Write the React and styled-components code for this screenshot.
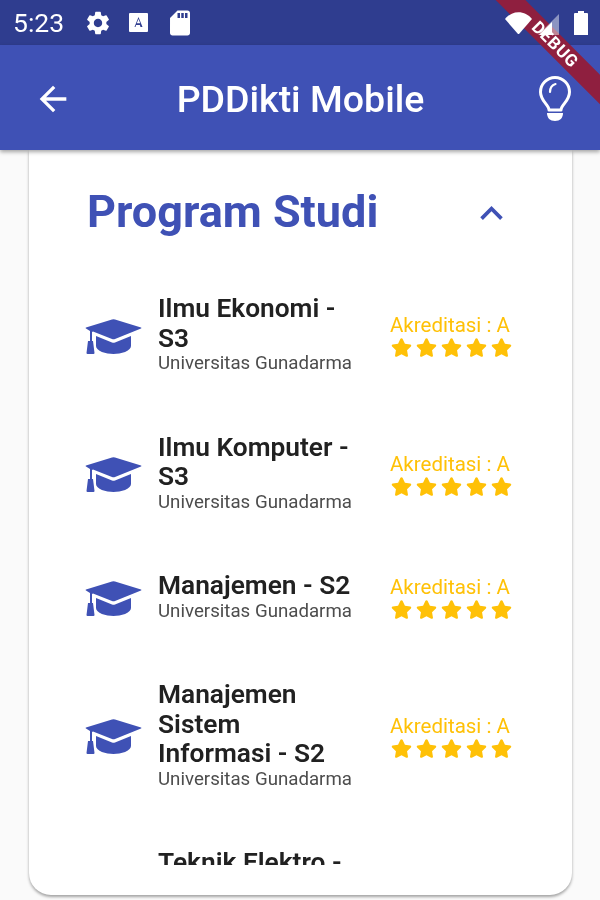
import React from 'react';
import styled, { createGlobalStyle } from 'styled-components';
import { MdArrowBack, MdSettings, MdSdCard, MdKeyboardArrowUp } from 'react-icons/md';
import { FaStar } from 'react-icons/fa';

const Global = createGlobalStyle`
  html, body { margin: 0; padding: 0; background: #fafafa; }
  body { font-family: Roboto, "Liberation Sans", sans-serif; }
`;

const Screen = styled.div`
  position: relative; width: 600px; height: 900px; overflow: hidden;
  background: #fafafa; display: flex; flex-direction: column; filter: blur(0.6px);
`;
const StatusBar = styled.div`
  height: 45px; background: #2f3d8f; color: #fff; display: flex; align-items: center;
  padding: 0 12px 0 13px; box-sizing: border-box; flex: none;
`;
const Clock = styled.span`font-size: 26.5px; line-height: 45px; width: 71px;`;
const StatusIcons = styled.div`display: flex; align-items: center; gap: 17px; flex: 1; svg { display: block; }`;
const Tray = styled.div`
  display: flex; align-items: center; position: relative; z-index: 4; svg { display: block; }
  > :nth-child(2) { margin-left: 6px; margin-top: 3px; }
  > :nth-child(3) { margin-left: 15px; }
`;
const AppBar = styled.header`
  height: 105px; background: #3f51b5; color: #fff; display: flex; align-items: center; flex: none;
  justify-content: space-between; padding: 2px 29px 0 33px; box-sizing: border-box;
  box-shadow: 0 2px 4px rgba(0,0,0,.35); position: relative; z-index: 1;
`;
const Title = styled.h1`margin: 1px 11px 0 0; font-size: 37.5px; font-weight: 500; line-height: 42px;`;
const Body = styled.main`flex: 1; padding: 0 28px 5px 29px; min-height: 0; display: flex;`;
const Card = styled.section`
  flex: 1; background: #fff; border-radius: 0 0 22px 22px; box-shadow: 0 2px 3px rgba(0,0,0,.35);
  padding: 0 60px 30px 56px; display: flex; flex-direction: column; min-height: 0;
`;
const CardHead = styled.div`
  display: flex; align-items: center; justify-content: space-between; height: 123px; padding: 0 0 0 2px; flex: none;
`;
const CardTitle = styled.h2`margin: 0; color: #3f51b5; font-size: 45px; font-weight: 700; line-height: 52px;`;
const Collapse = styled.span`display: flex; color: #3f51b5; margin: 3px -2px 0 0;`;
const List = styled.div`flex: 1; overflow: hidden; display: flex; flex-direction: column; gap: 59.5px; padding-top: 21px; min-height: 0;`;
const Row = styled.article`display: flex; align-items: center; flex: none;`;
const Cap = styled.div`width: 73px; flex: none; display: flex; margin-top: 5px; color: #3f51b5; svg { display: block; }`;
const Info = styled.div`width: 232px; flex: none; padding-right: 34px; box-sizing: border-box;`;
const Course = styled.div`font-size: 26.3px; font-weight: 600; line-height: 29.5px; color: #212121;`;
const Campus = styled.div`font-size: 18.7px; line-height: 20px; color: #4d4d4d; white-space: nowrap;`;
const Rating = styled.div`display: flex; flex-direction: column; align-items: flex-start; width: 122px; flex: none; margin-top: 4px;`;
const Grade = styled.div`font-size: 20.5px; line-height: 24px; color: #ffc107; white-space: nowrap;`;
const Stars = styled.div`display: flex; gap: 4px; margin-left: 1px; color: #ffc107; svg { display: block; }`;
const Ribbon = styled.div`
  position: absolute; top: 34px; right: -40px; width: 170px; height: 21px; transform: rotate(45deg);
  background: #8f1f3f; color: #fff; font-size: 17px; font-weight: 700; line-height: 21px; text-align: center;
  letter-spacing: .6px; z-index: 3;
`;

const courses = [
  'Ilmu Ekonomi - S3',
  'Ilmu Komputer - S3',
  'Manajemen - S2',
  'Manajemen Sistem Informasi - S2',
  'Teknik Elektro - S2',
];

const GradCap = () => (
  <svg width="57" height="35" viewBox="0 0 57 35" fill="currentColor">
    <path d="M1 9.500Q0 9 1 8.500L27 .5Q28.500 0 30 .5L56 8.500Q57 9 56 9.500L30 20Q28.500 20.500 27 20L8 12.500 7 13v9L5 22V12z" />
    <path d="M11 17l16 6.500q1.500.5 3 0L46 17v10c0 5-10 8-17.500 8S11 32 11 27z" />
    <path d="M3 22h5l1.500 12q0 1-1 1H2.500q-1 0-1-1z" />
  </svg>
);
const Bulb = () => (
  <svg width="32" height="45" viewBox="0 0 32 45" fill="none" stroke="#fff">
    <path d="M10 34c0-5-8.500-9-8.500-18a14.500 14.500 0 0 1 29 0c0 9-8.500 13-8.500 18z" strokeWidth="3" strokeLinejoin="round" />
    <path d="M11 16c0-4 2-7 5.500-8" strokeWidth="2.200" strokeLinecap="round" />
    <path d="M8 37h16c0 5-3 8-8 8s-8-3-8-8z" fill="#fff" stroke="none" />
  </svg>
);
const AdBadge = () => (
  <svg width="19" height="19" viewBox="0 0 19 19">
    <rect width="19" height="19" rx="1" fill="#fff" />
    <path d="M5.500 14L9.500 4l4 10h-2l-.6-2H7.100l-.6 2zM7.800 10.200h3.400L9.500 6z" fill="#2f3d8f" fillRule="evenodd" />
  </svg>
);
const Wifi = () => (
  <svg width="27" height="22" viewBox="0 0 27 22"><path d="M0 7C7-2 20-2 27 7L14 22h-1z" fill="#fff" /></svg>
);
const Cell = () => (
  <svg width="21" height="21" viewBox="0 0 21 21"><path d="M21 0v21H0z" fill="#fff" opacity=".45" /><path d="M14 8v13H1z" fill="#fff" /></svg>
);
const Battery = () => (
  <svg width="14" height="24" viewBox="0 0 14 24"><path d="M4 0h6v2h3a1 1 0 0 1 1 1v21H0V3a1 1 0 0 1 1-1h3z" fill="#fff" /></svg>
);

export default function App() {
  return (
    <Screen>
      <Global />
      <StatusBar>
        <Clock>5:23</Clock>
        <StatusIcons>
          <MdSettings size={28} />
          <AdBadge />
          <MdSdCard size={30} />
        </StatusIcons>
        <Tray><Wifi /><Cell /><Battery /></Tray>
      </StatusBar>
      <AppBar>
        <MdArrowBack size={40} />
        <Title>PDDikti Mobile</Title>
        <Bulb />
      </AppBar>
      <Ribbon>DEBUG</Ribbon>
      <Body>
        <Card>
          <CardHead>
            <CardTitle>Program Studi</CardTitle>
            <Collapse><MdKeyboardArrowUp size={45} /></Collapse>
          </CardHead>
          <List>
            {courses.map((c) => (
              <Row key={c}>
                <Cap><GradCap /></Cap>
                <Info>
                  <Course>{c}</Course>
                  <Campus>Universitas Gunadarma</Campus>
                </Info>
                <Rating>
                  <Grade>Akreditasi : A</Grade>
                  <Stars>{[0, 1, 2, 3, 4].map((i) => <FaStar key={i} size={21} />)}</Stars>
                </Rating>
              </Row>
            ))}
          </List>
        </Card>
      </Body>
    </Screen>
  );
}
